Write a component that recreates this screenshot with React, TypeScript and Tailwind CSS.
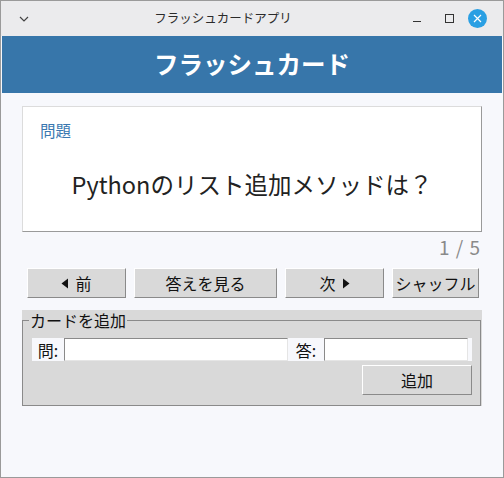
import React from "react";

const font = { fontFamily: '"Noto Sans CJK JP", "Noto Sans", sans-serif' };

function TriLeft() {
  return (
    <svg width="8" height="11" viewBox="0 0 8 11" className="inline-block">
      <path d="M7 0.5 L0.5 5.5 L7 10.5 Z" fill="#111" />
    </svg>
  );
}
function TriRight() {
  return (
    <svg width="8" height="11" viewBox="0 0 8 11" className="inline-block">
      <path d="M1 0.5 L7.5 5.5 L1 10.5 Z" fill="#111" />
    </svg>
  );
}

function TkButton({ w, children }: { w: string; children: React.ReactNode }) {
  return (
    <div
      className={`${w} h-[30px] flex items-center justify-center gap-[6px] bg-[#d9d9d9] border border-t-white border-l-white border-b-[#8a8a8a] border-r-[#8a8a8a] text-[16px] text-[#111] leading-none`}
    >
      {children}
    </div>
  );
}

export default function App() {
  return (
    <div
      className="w-[504px] h-[478px] flex flex-col border border-[#9a9a9a] bg-[#f7f8fc] overflow-hidden"
      style={font}
    >
      {/* Title bar */}
      <div className="h-[35px] shrink-0 flex items-center bg-[#ebebed]">
        <div className="w-[44px] flex justify-center pl-[2px]">
          <svg width="10" height="6" viewBox="0 0 10 6">
            <path d="M1 1 L5 5 L9 1" fill="none" stroke="#444" strokeWidth="1.2" />
          </svg>
        </div>
        <div className="flex-1 text-center text-[12.5px] text-[#2a2a2a]">フラッシュカードアプリ</div>
        <div className="w-[102px] flex items-center">
          <div className="w-[32px] flex justify-center">
            <div className="w-[8px] h-[1px] bg-[#333] mt-[5px]" />
          </div>
          <div className="w-[32px] flex justify-center">
            <div className="w-[9px] h-[9px] border border-[#333]" />
          </div>
          <div className="w-[19px] h-[19px] rounded-full bg-[#2a9fe3] flex items-center justify-center ml-[3px]">
            <svg width="9" height="9" viewBox="0 0 9 9">
              <path d="M1 1 L8 8 M8 1 L1 8" stroke="white" strokeWidth="1.2" />
            </svg>
          </div>
        </div>
      </div>

      {/* Header */}
      <div className="mx-[1px] h-[57px] shrink-0 bg-[#3776aa] flex items-center justify-center">
        <span className="text-white font-bold text-[24.5px] leading-none">フラッシュカード</span>
      </div>

      {/* Body */}
      <div className="flex flex-col px-[21px] pt-[13px]">
        {/* Card */}
        <div className="w-[460px] h-[126px] bg-white border border-t-[#dcdcdc] border-l-[#dcdcdc] border-b-[#9a9a9a] border-r-[#9a9a9a] flex flex-col">
          <div className="pl-[17px] pt-[12px] text-[15.5px] text-[#3a78b0] leading-[22px]">問題</div>
          <div className="flex-1 flex items-center justify-center pb-[2px] text-[23.5px] text-[#222]">
            Pythonのリスト追加メソッドは？
          </div>
        </div>

        {/* Counter */}
        <div className="h-[36px] flex justify-end items-start pr-[1px]">
          <span className="text-[19px] leading-[30px] text-[#8a8a8a] tracking-[1px]">1 / 5</span>
        </div>

        {/* Buttons */}
        <div className="flex gap-[8px] pl-[5px]">
          <TkButton w="w-[99px]">
            <TriLeft />
            <span>前</span>
          </TkButton>
          <TkButton w="w-[143px]">答えを見る</TkButton>
          <TkButton w="w-[99px]">
            <span>次</span>
            <TriRight />
          </TkButton>
          <TkButton w="w-[87px]">シャッフル</TkButton>
        </div>

        {/* Add card frame */}
        <div className="mt-[12px] w-[460px] h-[96px] bg-[#d9d9d9] flex flex-col">
          <div className="h-[10px] shrink-0" />
          <div className="relative flex-1 border border-[#8a8a8a] mr-[1px] flex flex-col px-[9px] pt-[17px]">
            <span className="absolute left-[6px] top-[-11px] bg-[#d9d9d9] px-[1px] text-[16px] leading-[20px] text-[#111]">
              カードを追加
            </span>
            <div className="h-[23px] w-[440px] flex bg-[#f7f8fc] pr-[4px]">
              <div className="w-[32px] flex items-center justify-center text-[16px] text-[#111]">問:</div>
              <div className="w-[224px] bg-white border border-t-[#8a8a8a] border-l-[#8a8a8a] border-b-[#e5e5e5] border-r-[#e5e5e5]" />
              <div className="w-[36px] flex items-center justify-center text-[16px] text-[#111]">答:</div>
              <div className="flex-1 bg-white border border-t-[#8a8a8a] border-l-[#8a8a8a] border-b-[#e5e5e5] border-r-[#e5e5e5]" />
            </div>
            <div className="flex justify-end pt-[4px] w-[440px]">
              <TkButton w="w-[110px]">追加</TkButton>
            </div>
          </div>
        </div>
      </div>
    </div>
  );
}
